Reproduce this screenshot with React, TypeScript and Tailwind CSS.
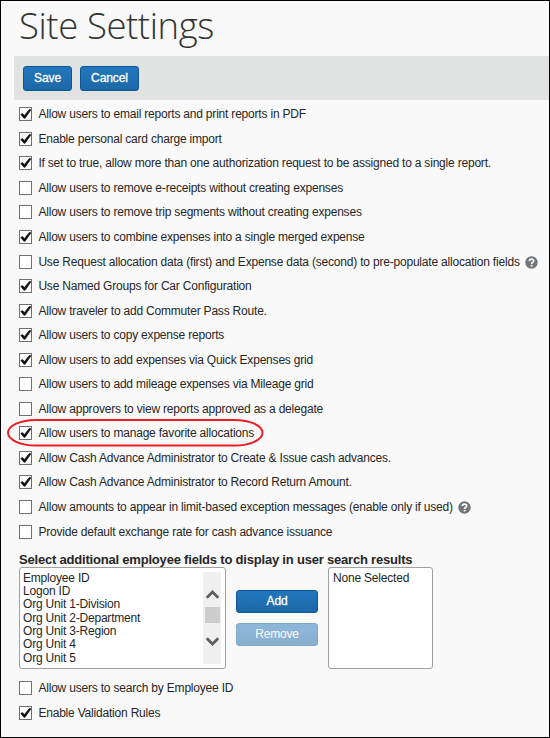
type Setting = { label: string; on?: boolean; help?: boolean; ring?: boolean };

const settings: Setting[] = [
  { label: "Allow users to email reports and print reports in PDF", on: true },
  { label: "Enable personal card charge import", on: true },
  { label: "If set to true, allow more than one authorization request to be assigned to a single report.", on: true },
  { label: "Allow users to remove e-receipts without creating expenses" },
  { label: "Allow users to remove trip segments without creating expenses" },
  { label: "Allow users to combine expenses into a single merged expense", on: true },
  { label: "Use Request allocation data (first) and Expense data (second) to pre-populate allocation fields", help: true },
  { label: "Use Named Groups for Car Configuration", on: true },
  { label: "Allow traveler to add Commuter Pass Route.", on: true },
  { label: "Allow users to copy expense reports", on: true },
  { label: "Allow users to add expenses via Quick Expenses grid", on: true },
  { label: "Allow users to add mileage expenses via Mileage grid" },
  { label: "Allow approvers to view reports approved as a delegate" },
  { label: "Allow users to manage favorite allocations", on: true, ring: true },
  { label: "Allow Cash Advance Administrator to Create & Issue cash advances.", on: true },
  { label: "Allow Cash Advance Administrator to Record Return Amount.", on: true },
  { label: "Allow amounts to appear in limit-based exception messages (enable only if used)", help: true },
  { label: "Provide default exchange rate for cash advance issuance" },
];

const searchSettings: Setting[] = [
  { label: "Allow users to search by Employee ID" },
  { label: "Enable Validation Rules", on: true },
];

const fields = [
  "Employee ID",
  "Logon ID",
  "Org Unit 1-Division",
  "Org Unit 2-Department",
  "Org Unit 3-Region",
  "Org Unit 4",
  "Org Unit 5",
];

function HelpIcon() {
  return (
    <svg width="13" height="13" viewBox="0 0 13 13" className="mt-px ml-[5px] shrink-0">
      <circle cx="6.5" cy="6.5" r="6.2" fill="#73777a" />
      <path d="M4.4 5.1C4.4 2.5 8.7 2.6 8.7 4.9C8.7 6.3 6.6 6.2 6.6 8" fill="none" stroke="#fff" strokeWidth="1.6" />
      <rect x="5.7" y="8.9" width="1.8" height="1.6" fill="#fff" />
    </svg>
  );
}

function Row({ label, on, help, ring }: Setting) {
  return (
    <div className="relative flex h-[24.55px] items-center">
      <span className="h-3.5 w-[13px] shrink-0 border border-[#707070] bg-white">
        {on && (
          <svg width="11" height="12" viewBox="0 0 11 12" className="block">
            <path d="M.8 6.5L2.4 5.5L4.4 7.5L9.4 1.4L11 1.7L5.1 10.2L3.9 10.2Z" fill="#111" stroke="#111" strokeWidth=".7" />
          </svg>
        )}
      </span>
      <span className="ml-[6.4px] whitespace-nowrap">{label}</span>
      {help && <HelpIcon />}
      {ring && (
        <svg width="258" height="30" viewBox="0 0 258 30" className="absolute -top-[2px] -left-3">
          <rect x="1" y="1" width="254.5" height="25.5" rx="28" ry="12.75" fill="none" stroke="#ed1c24" strokeWidth="1.9" />
        </svg>
      )}
    </div>
  );
}

function Button({ children, className }: { children: string; className: string }) {
  return (
    <button className={`flex items-center justify-center rounded-[3px] border border-[#0b5799] bg-linear-to-b from-[#2277bd] to-[#1d68a7] pb-px text-white ${className}`}>
      {children}
    </button>
  );
}

export default function App() {
  return (
    <main className="h-[738px] w-[550px] overflow-hidden border border-black bg-[#f9f9f9] font-['Liberation_Sans',Arial,sans-serif] text-xs tracking-[-0.2px] text-[#262626]">
      <h1 className="h-[55px] pl-[18px] font-['Open_Sans',sans-serif] text-[36.5px] leading-[48px] font-light tracking-[-0.4px] whitespace-nowrap text-[#333]">
        Site Settings
      </h1>
      <div className="ml-[13px] flex h-11 gap-2 bg-[#e1e3e2] pt-[10px] pl-[9px] tracking-[-0.1px] [-webkit-text-stroke:0.3px_white]">
        <Button className="h-[25px] w-[49px]">Save</Button>
        <Button className="h-[25px] w-[59px]">Cancel</Button>
      </div>
      <section className="mt-[2px] ml-[18px]">
        {settings.map((s) => (
          <Row key={s.label} {...s} />
        ))}
      </section>
      <section className="ml-[18px] pt-[8px]">
        <h2 className="h-[15px] text-[13px] leading-[15px] font-bold whitespace-nowrap">
          Select additional employee fields to display in user search results
        </h2>
        <div className="flex">
          <div className="flex h-[102px] w-[207px] justify-between rounded-[3px] border border-[#a0a0a0] bg-white py-1 pr-1 pl-[3px]">
            <ul className="leading-[13.3px]">
              {fields.map((f) => (
                <li key={f}>{f}</li>
              ))}
            </ul>
            <div className="flex h-[92px] w-[18px] flex-col items-center bg-[#f0f0f0] pt-[17px]">
              <svg width="13" height="11" viewBox="0 0 13 11">
                <path d="M.8 8.7L6.5 3L12.2 8.7" fill="none" stroke="#606060" strokeWidth="2.7" />
              </svg>
              <div className="mt-[7px] h-4 w-[15px] bg-[#cdcdcd]" />
              <svg width="13" height="11" viewBox="0 0 13 11" className="mt-[13px]">
                <path d="M.8 2.3L6.5 8L12.2 2.3" fill="none" stroke="#606060" strokeWidth="2.7" />
              </svg>
            </div>
          </div>
          <div className="ml-[10px] flex flex-col gap-[10px] pt-[23px]">
            <Button className="h-[23px] w-[82px] [-webkit-text-stroke:0.3px_white]">Add</Button>
            <Button className="h-[23px] w-[82px] opacity-50">Remove</Button>
          </div>
          <div className="ml-[10px] h-[102px] w-[105px] rounded-[3px] border border-[#a0a0a0] bg-white py-1 pl-1 leading-[13.3px]">
            None Selected
          </div>
        </div>
      </section>
      <section className="mt-[7px] ml-[18px]">
        {searchSettings.map((s) => (
          <Row key={s.label} {...s} />
        ))}
      </section>
    </main>
  );
}
